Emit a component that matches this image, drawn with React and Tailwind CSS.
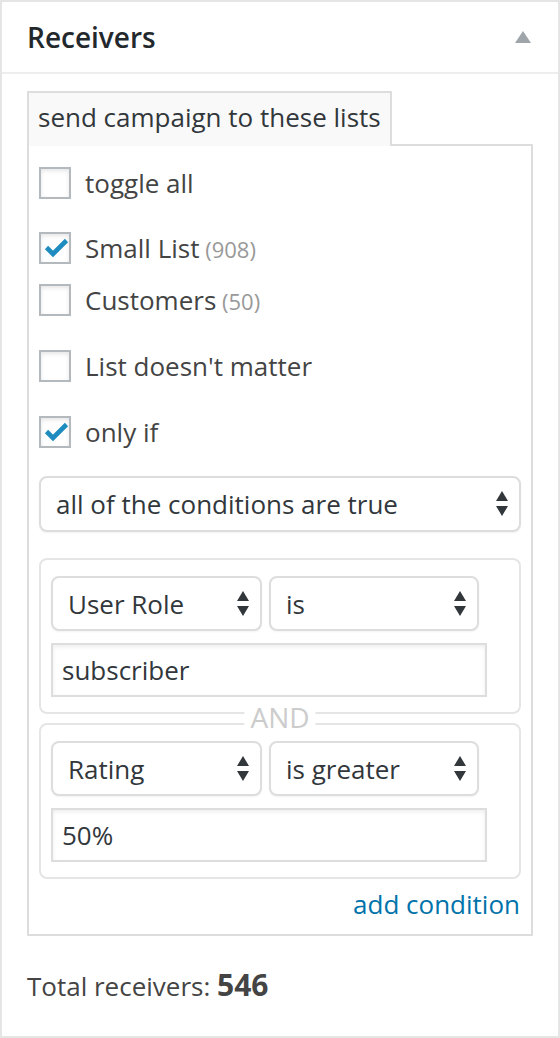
import { useState } from "react"

const Check = () => (
  <svg width="32" height="32" viewBox="0 0 32 32" className="absolute -left-[2px] -top-[2px]">
    <path d="M7.5 15.5 L14 22 L27.5 8.5" fill="none" stroke="#1e8cbe" strokeWidth="4.6" />
  </svg>
)

const Checkbox = ({ checked, label, count, className = "" }) => (
  <label className={`flex items-center gap-[14px] h-[32px] ${className}`}>
    <span className="relative block w-[32px] h-[32px] shrink-0 border-2 border-[#b4b9be] bg-white shadow-[inset_0_2px_4px_rgba(0,0,0,0.1)]">
      {checked && <Check />}
    </span>
    <span className="text-[26px] leading-[36px] text-[#444]">
      {label}
      {count !== undefined && (
        <span className="text-[22px] text-[#999]"> ({count})</span>
      )}
    </span>
  </label>
)

// up/down arrows drawn inside the select boxes
const Arrows = () => (
  <svg width="12" height="26" viewBox="0 0 12 26" className="shrink-0">
    <path d="M6 0 L12 10 L0 10 Z" fill="#32373c" />
    <path d="M0 15 L12 15 L6 25 Z" fill="#32373c" />
  </svg>
)

const Select = ({ value, className = "" }) => (
  <div
    className={`flex items-center justify-between border-2 border-[#ddd] rounded-[8px] bg-white pl-[15px] pr-[11px] shadow-[0_1px_2px_rgba(0,0,0,0.05)] ${className}`}
  >
    <span className="text-[26px] leading-[36px] text-[#32373c]">{value}</span>
    <Arrows />
  </div>
)

const TextInput = ({ value }) => (
  <div className="mt-[12px] w-[436px] h-[54px] border-2 border-[#ddd] bg-white pl-[9px] flex items-center shadow-[inset_0_2px_4px_rgba(0,0,0,0.07)]">
    <span className="text-[26px] leading-[36px] text-[#32373c]">{value}</span>
  </div>
)

const Condition = ({ field, operator, value }) => (
  <div className="border-2 border-[#e5e5e5] rounded-[8px] pt-[16px] pb-[15px] px-[10px]">
    <div className="flex gap-[7px]">
      <Select value={field} className="w-[211px] h-[55px]" />
      <Select value={operator} className="w-[210px] h-[55px]" />
    </div>
    <TextInput value={value} />
  </div>
)

export default function App() {
  const [open] = useState(true)

  const conditions = [
    { field: "User Role", operator: "is", value: "subscriber" },
    { field: "Rating", operator: "is greater", value: "50%" },
  ]

  return (
    <div className="w-[560px] h-[1038px] border-2 border-[#e5e5e5] bg-white font-['Open_Sans',sans-serif] text-[#444]">
      <div className="h-[72px] border-b-2 border-[#eee] flex items-center justify-between pl-[25px] pr-[27px]">
        <h2 className="text-[28px] leading-[36px] font-semibold text-[#23282d]">Receivers</h2>
        <svg width="16" height="12" viewBox="0 0 16 12">
          <path d="M8 0 L16 12 L0 12 Z" fill="#a0a5aa" />
        </svg>
      </div>

      {open && (
        <div className="px-[25px] pt-[17px]">
          <div className="relative z-10 inline-block h-[55px] -mb-[2px] border-2 border-b-0 border-[#ddd] bg-[#f9f9f9] px-[9px] pt-[6px]">
            <span className="text-[26px] leading-[36px] text-[#32373c]">send campaign to these lists</span>
          </div>

          <div className="border-2 border-[#ddd] px-[10px] pt-[21px] pb-[12px]">
            <Checkbox label="toggle all" />
            <Checkbox label="Small List" count={908} checked className="mt-[33px]" />
            <Checkbox label="Customers" count={50} className="mt-[20px]" />
            <Checkbox label="List doesn't matter" className="mt-[34px]" />
            <Checkbox label="only if" checked className="mt-[34px]" />

            <Select value="all of the conditions are true" className="mt-[28px] h-[56px]" />

            <div className="mt-[26px]">
              {conditions.map((c, i) => (
                <div key={c.field} className={`relative ${i > 0 ? "mt-[9px]" : ""}`}>
                  {i > 0 && (
                    <span className="absolute left-1/2 -translate-x-1/2 -top-[20px] bg-white px-[6px] text-[28px] leading-[28px] text-[#ccc]">
                      AND
                    </span>
                  )}
                  <Condition {...c} />
                </div>
              ))}
            </div>

            <div className="mt-[7px] text-right">
              <a className="text-[26px] leading-[36px] text-[#0073aa] pr-px">add condition</a>
            </div>
          </div>

          <p className="mt-[29px] leading-[40px] text-[26px] text-[#444]">
            Total receivers: <strong className="text-[30px] font-bold text-[#444]">546</strong>
          </p>
        </div>
      )}
    </div>
  )
}
